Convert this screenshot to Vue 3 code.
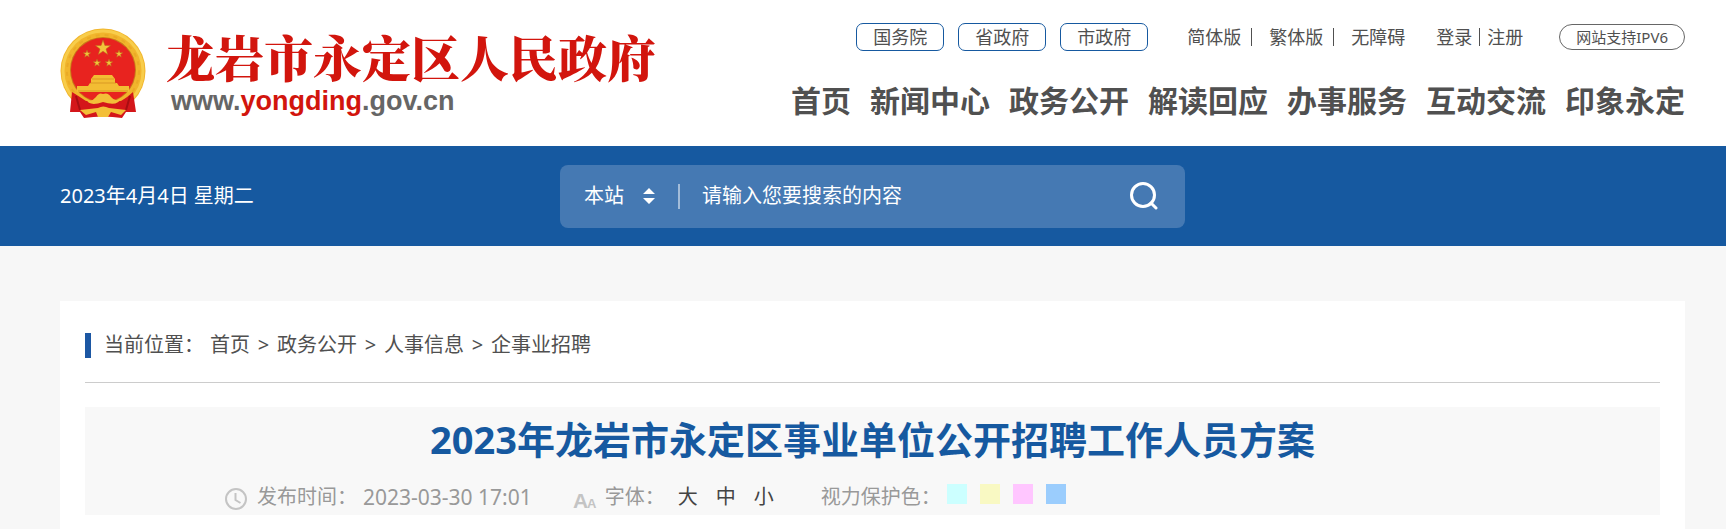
<template>
  <div class="page" lang="zh-CN">
    <header class="header">
      <a class="logo" href="#">
        <svg class="emblem" viewBox="0 0 86 92" aria-hidden="true">
          <circle cx="43" cy="43" r="42.5" fill="#f1b52c" />
          <circle cx="43" cy="43" r="40" fill="none" stroke="#f8cd4b" stroke-width="3" />
          <circle cx="43" cy="43" r="36" fill="none" stroke="#eaaa26" stroke-width="2" stroke-dasharray="4 5" />
          <circle cx="43" cy="42" r="33" fill="#c9781a" />
          <circle cx="43" cy="42" r="32" fill="#e8231f" />
          <g fill="#f2c53a" stroke="#b9641c" stroke-width="0.5">
            <polygon :points="star(43, 20, 8)" />
            <polygon :points="star(27, 26, 4)" />
            <polygon :points="star(59, 26, 4)" />
            <polygon :points="star(37, 35, 4)" />
            <polygon :points="star(49, 35, 4)" />
          </g>
          <path d="M31 51 L34 47 H52 L55 51 V55 H57 L59 58 H69 V64 H17 V58 H28 L30 55 H31 Z" fill="#f3bd33" />
          <path d="M32 51 H54 M30 55 H56 M18 63 H68" stroke="#d08a1c" stroke-width="0.7" fill="none" />
          <path d="M12 64 Q20 69 26 73 H61 Q68 69 73 64 L76 84 L66 84 L62 90 Q43 87 24 90 L20 84 L10 84 Z" fill="#d4161a" />
          <path d="M16 68 L20 82 M70 68 L66 82" stroke="#a80e12" stroke-width="2" />
          <path d="M26 71 Q31 75 36 69 Q39 64 43 66 Q48 64 51 69 Q56 75 61 70 Q58 79 43 74 Q29 79 26 71 Z" fill="#f3bf38" />
          <path d="M20 82 L38 80 Q43 77 49 80 L66 82 L61 87 L51 84 L48 89 H38 L36 84 L26 87 Z" fill="#f3bf38" />
        </svg>
        <span class="logo-text">
          <span class="site-name">龙岩市永定区人民政府</span>
          <span class="site-url">www.<em>yongding</em>.gov.cn</span>
        </span>
      </a>

      <div class="header-right">
        <div class="top-links">
          <div class="gov-links">
            <a v-for="item in govLinks" :key="item" href="#">{{ item }}</a>
          </div>
          <div class="versions">
            <a href="#">简体版</a><i></i>
            <a href="#">繁体版</a><i></i>
            <a href="#">无障碍</a>
          </div>
          <div class="account">
            <a href="#">登录</a><i></i><a href="#">注册</a>
          </div>
          <span class="ipv6">网站支持IPV6</span>
        </div>
        <nav class="nav">
          <a v-for="item in navList" :key="item" href="#">{{ item }}</a>
        </nav>
      </div>
    </header>

    <div class="search-bar">
      <span class="date">2023年4月4日 星期二</span>
      <form class="search" @submit.prevent>
        <div class="scope">
          <select v-model="scope" aria-label="搜索范围">
            <option value="site">本站</option>
          </select>
          <svg viewBox="0 0 12 16" aria-hidden="true">
            <path d="M6 0 L12 6 H0 Z M0 10 H12 L6 16 Z" fill="#fff" />
          </svg>
        </div>
        <input v-model="keyword" type="text" placeholder="请输入您要搜索的内容" aria-label="搜索内容" />
        <button type="submit" aria-label="搜索">
          <svg viewBox="0 0 28 28" fill="none" stroke="#fff" stroke-width="3" stroke-linecap="round">
            <circle cx="13" cy="13" r="11.5" />
            <path d="M21 21 L26 26" />
          </svg>
        </button>
      </form>
    </div>

    <main class="content">
      <div class="crumbs">
        <span class="crumb-label">当前位置：</span>
        <template v-for="(item, index) in crumbs" :key="item">
          <span v-if="index > 0" class="sep">&gt;</span>
          <a href="#">{{ item }}</a>
        </template>
      </div>

      <div class="article-head">
        <h1>2023年龙岩市永定区事业单位公开招聘工作人员方案</h1>
        <div class="meta">
          <div class="publish">
            <svg class="meta-icon" viewBox="0 0 22 22" fill="none" stroke="#c4c4c4" stroke-width="2" aria-hidden="true">
              <circle cx="11" cy="11" r="10" />
              <path d="M10.5 5 V12 L15.5 15" />
            </svg>
            <span>发布时间：</span>
            <time>2023-03-30 17:01</time>
          </div>
          <div class="font-size">
            <svg class="meta-icon" viewBox="0 0 22 22" aria-hidden="true">
              <text x="0" y="20" font-size="21" class="icon-letter">A</text>
              <text x="14" y="20" font-size="13" class="icon-letter">A</text>
            </svg>
            <span>字体：</span>
            <button v-for="item in sizes" :key="item" type="button">{{ item }}</button>
          </div>
          <div class="eye-color">
            <span>视力保护色：</span>
            <div class="swatches">
              <button
                v-for="color in colors"
                :key="color"
                type="button"
                :aria-label="color"
                :style="{ backgroundColor: color }"
              ></button>
            </div>
          </div>
        </div>
      </div>
    </main>
  </div>
</template>

<script setup>
import { ref } from 'vue';

const scope = ref('site');
const keyword = ref('');

const govLinks = ['国务院', '省政府', '市政府'];
const navList = ['首页', '新闻中心', '政务公开', '解读回应', '办事服务', '互动交流', '印象永定'];
const crumbs = ['首页', '政务公开', '人事信息', '企事业招聘'];
const sizes = ['大', '中', '小'];
const colors = ['#ccffff', '#f9f9c3', '#ffc6ff', '#9bcdfd'];

// 五角星顶点
const star = (cx, cy, r) => {
  const points = [];
  for (let i = 0; i < 10; i++) {
    const radius = i % 2 === 0 ? r : r * 0.4;
    const angle = (Math.PI / 5) * i - Math.PI / 2;
    points.push(`${cx + radius * Math.cos(angle)},${cy + radius * Math.sin(angle)}`);
  }
  return points.join(' ');
};
</script>

<style>
body {
  background: #f7f7f7;
}
</style>

<style scoped>
.page {
  font-family: 'Noto Sans', 'Noto Sans CJK SC', sans-serif;
  font-size: 20px;
  line-height: 28px;
  color: #505050;
}

a {
  color: inherit;
  text-decoration: none;
}

button,
input,
select {
  font: inherit;
  color: inherit;
  background: none;
  border: none;
  padding: 0;
  margin: 0;
}

button {
  cursor: pointer;
}

.header {
  display: flex;
  justify-content: space-between;
  align-items: flex-start;
  box-sizing: border-box;
  min-height: 146px;
  padding: 23px 41px 0 60px;
  background: #fff;
}

.logo {
  display: flex;
  gap: 20px;
  padding-top: 5px;
}

.emblem {
  width: 86px;
  height: 92px;
}

.logo-text {
  display: flex;
  flex-direction: column;
}

.site-name {
  font-family: 'Noto Serif CJK SC', 'Noto Sans CJK SC', serif;
  font-size: 49px;
  font-weight: 900;
  line-height: 56px;
  color: #d2150d;
  white-space: nowrap;
}

.site-url {
  padding-left: 5px;
  font-family: 'Liberation Sans', Arial, sans-serif;
  font-size: 27px;
  font-weight: bold;
  line-height: 34px;
  color: #666;
}

.site-url em {
  font-style: normal;
  color: #d2150d;
}

.header-right {
  display: flex;
  flex-direction: column;
  align-items: flex-end;
  gap: 28px;
}

.top-links {
  display: flex;
  align-items: center;
  font-size: 18px;
  white-space: nowrap;
}

.gov-links {
  display: flex;
  gap: 14px;
  margin-right: 39px;
}

.gov-links a {
  padding: 0 16px;
  border: 1px solid #1659a0;
  border-radius: 7px;
  line-height: 26px;
}

.versions,
.account {
  display: flex;
  align-items: center;
}

.versions {
  margin-right: 31px;
}

.account {
  margin-right: 36px;
}

.versions i,
.account i {
  width: 1px;
  height: 18px;
  background: #505050;
}

.versions i {
  margin: 0 17px 0 10px;
}

.account i {
  margin: 0 7px;
}

.ipv6 {
  padding: 0 16px;
  border: 1px solid #666;
  border-radius: 13px;
  font-size: 15px;
  line-height: 24px;
}

.nav {
  display: flex;
  gap: 19px;
  font-size: 30px;
  font-weight: bold;
  line-height: 44px;
  white-space: nowrap;
}

.search-bar {
  display: grid;
  grid-template-columns: 1fr 625px 1fr;
  align-items: center;
  min-height: 100px;
  padding: 0 41px 0 60px;
  background: #1659a0;
  color: #fff;
}

.search {
  display: flex;
  align-items: center;
  box-sizing: border-box;
  height: 63px;
  padding: 0 27px 0 24px;
  border-radius: 8px;
  background: #4579b3;
}

.scope {
  position: relative;
  display: flex;
  align-items: center;
  width: 94px;
  height: 25px;
  border-right: 2px solid #a2bcd9;
}

.scope select {
  width: 76px;
  appearance: none;
  outline: none;
}

.scope option {
  color: #333;
}

.scope svg {
  position: absolute;
  right: 23px;
  width: 12px;
  height: 16px;
  pointer-events: none;
}

.search input {
  flex: 1;
  min-width: 0;
  padding-left: 22px;
  outline: none;
}

.search input::placeholder {
  color: #fff;
  opacity: 1;
}

.search button svg {
  display: block;
  width: 28px;
  height: 28px;
}

.content {
  margin: 55px 41px 0 60px;
  padding: 0 25px 14px;
  background: #fff;
}

.crumbs {
  display: flex;
  align-items: center;
  height: 74px;
  padding-top: 7px;
  border-bottom: 1px solid #ccc;
}

.crumbs::before {
  content: '';
  width: 6px;
  height: 25px;
  margin-right: 13px;
  background: #1c57a3;
}

.crumb-label {
  margin-right: 6px;
}

.sep {
  width: 27px;
  text-align: center;
}

.article-head {
  margin-top: 24px;
  padding: 5px 0 4px;
  background: #f8f8f8;
}

h1 {
  margin: 0;
  font-size: 38px;
  line-height: 54px;
  text-align: center;
  color: #1659a0;
}

.meta {
  display: flex;
  padding: 17px 0 0 140px;
  color: #999;
}

.publish,
.font-size,
.eye-color {
  display: flex;
  align-items: center;
}

.publish {
  margin-right: 41px;
}

.meta-icon {
  width: 22px;
  height: 22px;
  margin-top: 4px;
  margin-right: 10px;
  overflow: visible;
}

time {
  margin-left: 6px;
  font-size: 21px;
}

.icon-letter {
  font-family: 'Liberation Sans', Arial, sans-serif;
  font-weight: bold;
  fill: #c4c4c4;
}

.font-size {
  margin-right: 47px;
}

.font-size span {
  margin-right: 13px;
}

.font-size button {
  color: #444;
}

.font-size button + button {
  margin-left: 18px;
}

.swatches {
  display: flex;
  gap: 13px;
  margin-left: 6px;
  padding-bottom: 6px;
}

.swatches button {
  width: 20px;
  height: 20px;
}
</style>
